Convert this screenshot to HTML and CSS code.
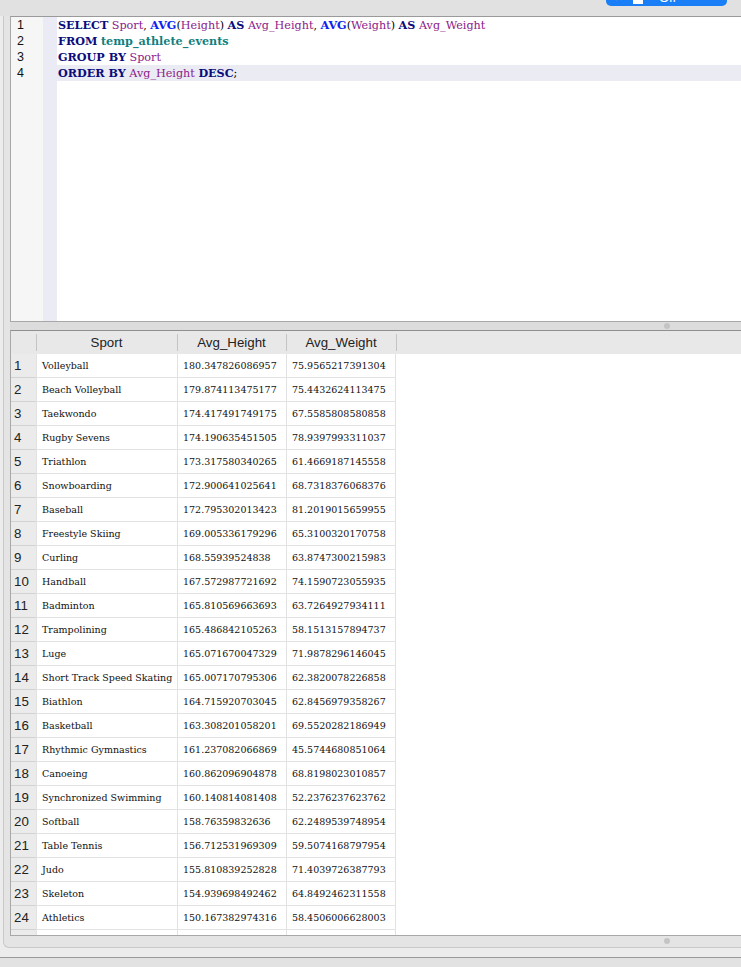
FILE: index.html
```html
<!DOCTYPE html>
<html>
<head>
<meta charset="utf-8">
<link rel="stylesheet" href="styles.css">
</head>
<body>
<div class="topbar">
  <div class="pill"><span class="x">✕</span><span class="doc"></span><span class="off">Off</span></div>
</div>
<div class="frame">
  <div class="editor">
    <div class="nums"><div>1</div><div>2</div><div>3</div><div>4</div></div>
    <div class="fold"></div>
    <div class="code">
      <div class="ln"><b class="kw">SELECT</b> <span class="id">Sport</span>, <b class="fn">AVG</b>(<span class="id">Height</span>) <b class="kw">AS</b> <span class="id">Avg_Height</span>, <b class="fn">AVG</b>(<span class="id">Weight</span>) <b class="kw">AS</b> <span class="id">Avg_Weight</span></div>
      <div class="ln"><b class="kw">FROM</b> <b class="tb">temp_athlete_events</b></div>
      <div class="ln"><b class="kw">GROUP BY</b> <span class="id">Sport</span></div>
      <div class="ln cur"><b class="kw">ORDER BY</b> <span class="id">Avg_Height</span> <b class="kw">DESC</b>;</div>
    </div>
  </div>
  <div class="split"><span class="dot"></span></div>
  <div class="results">
    <div class="grid" id="grid">
      <div class="hrow"><div class="hc rn"></div><div class="hc c1">Sport</div><div class="hc c2">Avg_Height</div><div class="hc c3">Avg_Weight</div><div class="hc rest"></div></div>
    </div>
  </div>
  <div class="split2"><span class="dot"></span></div>
</div>
<div class="bottomstrip"></div>
<div class="bottombar"></div>
<script src="app.js"></script>
</body>
</html>
```
FILE: app.js
```js
const rows = [
["Volleyball","180.347826086957","75.9565217391304"],
["Beach Volleyball","179.874113475177","75.4432624113475"],
["Taekwondo","174.417491749175","67.5585808580858"],
["Rugby Sevens","174.190635451505","78.9397993311037"],
["Triathlon","173.317580340265","61.4669187145558"],
["Snowboarding","172.900641025641","68.7318376068376"],
["Baseball","172.795302013423","81.2019015659955"],
["Freestyle Skiing","169.005336179296","65.3100320170758"],
["Curling","168.55939524838","63.8747300215983"],
["Handball","167.572987721692","74.1590723055935"],
["Badminton","165.810569663693","63.7264927934111"],
["Trampolining","165.486842105263","58.1513157894737"],
["Luge","165.071670047329","71.9878296146045"],
["Short Track Speed Skating","165.007170795306","62.3820078226858"],
["Biathlon","164.715920703045","62.8456979358267"],
["Basketball","163.308201058201","69.5520282186949"],
["Rhythmic Gymnastics","161.237082066869","45.5744680851064"],
["Canoeing","160.862096904878","68.8198023010857"],
["Synchronized Swimming","160.140814081408","52.2376237623762"],
["Softball","158.76359832636","62.2489539748954"],
["Table Tennis","156.712531969309","59.5074168797954"],
["Judo","155.810839252828","71.4039726387793"],
["Skeleton","154.939698492462","64.8492462311558"],
["Athletics","150.167382974316","58.4506006628003"],
["","",""]
];
const g = document.getElementById('grid');
rows.forEach((r, i) => {
  const d = document.createElement('div');
  d.className = 'row';
  d.innerHTML = '<div class="rc rn">' + (i < 24 ? (i + 1) : '') + '</div>' +
    '<div class="dc c1">' + r[0] + '</div>' +
    '<div class="dc c2">' + r[1] + '</div>' +
    '<div class="dc c3">' + r[2] + '</div>';
  g.appendChild(d);
});
```
FILE: styles.css
```css
* { box-sizing: border-box; }
html, body { margin: 0; padding: 0; }
body {
  width: 741px;
  height: 967px;
  overflow: hidden;
  background: #ececec;
  font-family: "Liberation Sans", Arial, sans-serif;
}
.topbar {
  height: 16px;
  background: #e1e1e1;
  position: relative;
}
.pill {
  position: absolute;
  left: 606px;
  top: -11px;
  width: 121px;
  height: 17px;
  background: #1a7ef7;
  border-radius: 5px;
  color: #fff;
  font-size: 13px;
  display: flex;
  align-items: center;
  padding-left: 8px;
  gap: 10px;
}
.pill .x { font-size: 11px; }
.pill .doc { width: 10px; height: 12px; background: #fff; }
.pill .off { margin-left: 6px; }
.frame {
  margin-left: 3px;
  height: 932px;
  background: #e4e4e4;
  border-left: 1px solid #c9c9c9;
  border-bottom: 1px solid #c9c9c9;
  border-bottom-left-radius: 6px;
  padding-left: 6px;
  display: flex;
  flex-direction: column;
}
.editor {
  height: 306px;
  background: #fff;
  border-top: 1px solid #9a9a9a;
  border-left: 1px solid #a8a8a8;
  border-bottom: 1px solid #a8a8a8;
  display: flex;
}
.nums {
  width: 32px;
  background: #f6f6f6;
  font-size: 12.5px;
  color: #111;
}
.nums div {
  height: 16px;
  line-height: 16px;
  padding-left: 6px;
}
.fold { width: 14px; background: #ebebf5; }
.code {
  flex: 1;
  font-family: "DejaVu Serif", serif;
  font-size: 11.2px;
  color: #000;
}
.ln {
  height: 16px;
  line-height: 16px;
  padding-left: 1px;
  white-space: nowrap;
}
.ln.cur { background: #ebebf4; }
.kw { color: #0b0b7c; }
.fn { color: #0a22f0; }
.id { color: #8a1a8a; }
.tb { color: #127f7f; }
.split {
  height: 8px;
  background: #dcdcdc;
  display: flex;
  align-items: center;
  padding-left: 654px;
}
.dot {
  width: 6px; height: 6px; border-radius: 50%;
  background: #c4c4c4;
}
.results {
  height: 607px;
  background: #fff;
  border-top: 1px solid #8f8f8f;
  border-left: 1px solid #a8a8a8;
  border-bottom: 1px solid #a8a8a8;
  overflow: hidden;
}
.hrow {
  display: flex;
  height: 23px;
  background: #e8e8e8;
}
.hc {
  font-size: 13.3px;
  color: #222;
  text-align: center;
  line-height: 23px;
  position: relative;
}
.hc.rn { width: 25px; }
.hc.c1 { width: 141px; }
.hc.c2 { width: 109px; }
.hc.c3 { width: 110px; }
.hc.rest { flex: 1; }
.hc + .hc::before {
  content: "";
  position: absolute;
  left: 0; top: 3px; bottom: 3px;
  width: 1px;
  background: #c4c4c4;
}
.row { display: flex; height: 24px; }
.rc.rn {
  width: 25px;
  background: #ebebeb;
  font-size: 13.3px;
  color: #222;
  padding-left: 3px;
  line-height: 24px;
  border-bottom: 1px solid #d2d2d2;
}
.dc {
  font-family: "DejaVu Serif", serif;
  font-size: 9.5px;
  color: #111;
  line-height: 23px;
  padding-left: 5px;
  border-left: 1px solid #e2e2e2;
  border-bottom: 1px solid #e2e2e2;
  white-space: nowrap;
  overflow: hidden;
}
.dc.c1 { width: 141px; }
.dc.c2 { width: 109px; }
.dc.c3 { width: 110px; border-right: 1px solid #e2e2e2; }
.split2 {
  height: 11px;
  display: flex;
  align-items: center;
  padding-left: 654px;
}
.bottomstrip {
  height: 10px;
  background: #ececec;
  border-bottom: 1px solid #9a9a9a;
}
.bottombar {
  height: 20px;
  background: #e2e2e2;
}
```
